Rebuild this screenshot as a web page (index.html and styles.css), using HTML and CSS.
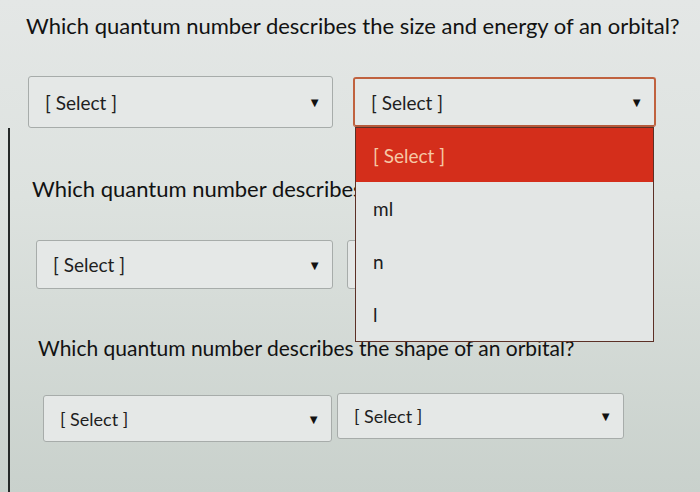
FILE: index.html
```html
<!DOCTYPE html>
<html lang="en">
<head>
<meta charset="utf-8">
<title>Quantum numbers</title>
<link rel="stylesheet" href="styles.css">
</head>
<body>
<div class="page">
  <section class="q q-one">
    <p class="question">Which quantum number describes the size and energy of an orbital?</p>
    <div class="row row-one">
      <div class="select"><span class="label">[ Select ]</span><span class="arrow">▼</span></div>
      <div class="select focused">
        <span class="label">[ Select ]</span><span class="arrow">▼</span>
        <ul class="menu">
          <li class="opt active">[ Select ]</li>
          <li class="opt">ml</li>
          <li class="opt">n</li>
          <li class="opt">l</li>
        </ul>
      </div>
    </div>
  </section>
  <div class="lower">
    <section class="q q-two">
      <p class="question">Which quantum number describes</p>
      <div class="row row-two">
        <div class="select"><span class="label">[ Select ]</span><span class="arrow">▼</span></div>
        <div class="select covered"></div>
      </div>
    </section>
    <section class="q q-three">
      <p class="question">Which quantum number describes the shape of an orbital?</p>
      <div class="row row-three">
        <div class="select"><span class="label">[ Select ]</span><span class="arrow">▼</span></div>
        <div class="select"><span class="label">[ Select ]</span><span class="arrow">▼</span></div>
      </div>
    </section>
  </div>
</div>
</body>
</html>
```
FILE: styles.css
```css
html, body {
  margin: 0;
  padding: 0;
}
body {
  width: 700px;
  height: 492px;
  overflow: hidden;
  background: linear-gradient(180deg, #e4e7e6 0%, #dde2df 40%, #c9d1cc 100%);
  font-family: Lato, "Open Sans", sans-serif;
  color: #141414;
}
.page {
  padding-top: 11px;
}
.q {
  margin: 0;
}
.question {
  margin: 0;
  font-size: 22px;
  line-height: 30px;
  color: #121212;
  white-space: nowrap;
}
.row {
  display: flex;
  align-items: flex-start;
}
.select {
  position: relative;
  display: flex;
  align-items: center;
  justify-content: space-between;
  box-sizing: border-box;
  padding: 0 11px 0 16px;
  background: #e5e8e7;
  border: 1px solid #a7acaa;
  border-radius: 3px;
  font-size: 19px;
  color: #1e1e1e;
}
.arrow {
  font-size: 13px;
  color: #111;
}
.q-one {
  padding-left: 26px;
}
.row-one {
  margin-top: 35px;
  margin-left: 2px;
  gap: 20px;
}
.row-one .select {
  width: 305px;
  height: 52px;
}
.row-one .select.focused {
  width: 303px;
  height: 50px;
  margin-top: 1px;
  border: 2px solid #c0623f;
  border-bottom-color: #b55a3c;
}
.menu {
  position: absolute;
  top: 48px;
  left: 0;
  width: 297px;
  margin: 0;
  padding: 0;
  list-style: none;
  background: #e3e6e5;
  border: 1px solid #5c3026;
  z-index: 2;
}
.opt {
  height: 53px;
  display: flex;
  align-items: center;
  padding-left: 17px;
  font-size: 19px;
  color: #1c1c1c;
}
.opt.active {
  height: 54px;
  background: #d42e1b;
  color: #f6c8a6;
}
.lower {
  box-sizing: border-box;
  min-height: 364px;
  margin-left: 8px;
  border-left: 2px solid #252928;
  padding-top: 46px;
}
.q-two {
  padding-left: 22px;
}
.row-two {
  margin-top: 36px;
  margin-left: 4px;
  gap: 14px;
}
.row-two .select {
  width: 297px;
  height: 49px;
}
.q-three {
  padding-left: 28px;
  margin-top: 44px;
}
.q-three .question {
  font-size: 21px;
}
.row-three {
  margin-top: 32px;
  margin-left: 5px;
  gap: 5px;
}
.row-three .select {
  width: 289px;
  height: 47px;
  font-size: 18px;
}
.row-three .select + .select {
  width: 287px;
  height: 46px;
  margin-top: -2px;
}
```
